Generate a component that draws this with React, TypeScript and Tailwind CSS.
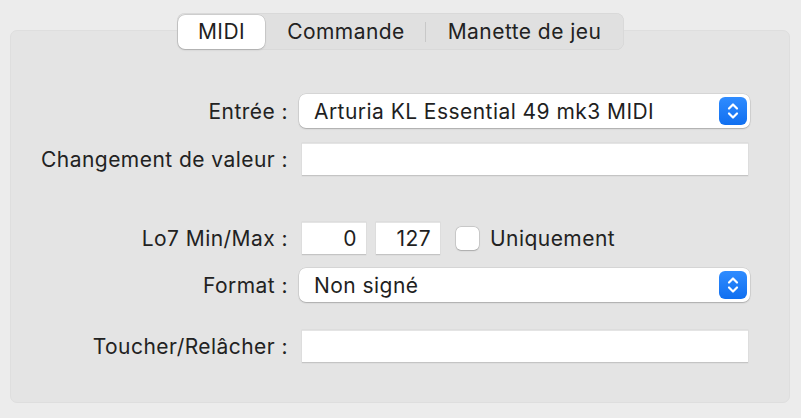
import React from 'react';

const font = { fontFamily: 'Inter, "Noto Sans", sans-serif' };

function Stepper() {
  return (
    <div className="w-[28px] h-[28px] rounded-[6px] bg-gradient-to-b from-[#2f8cff] to-[#0f6ff0] flex items-center justify-center">
      <svg width="14" height="20" viewBox="0 0 14 20" fill="none" stroke="white" strokeWidth="2.2" strokeLinecap="round" strokeLinejoin="round">
        <path d="M3 7.5 L7 3.5 L11 7.5" />
        <path d="M3 12.5 L7 16.5 L11 12.5" />
      </svg>
    </div>
  );
}

function Popup({ value }: { value: string }) {
  return (
    <div className="h-[34px] w-[451px] bg-white rounded-[7px] shadow-[0_0_0_0.5px_rgba(0,0,0,0.12),0_1px_1.5px_rgba(0,0,0,0.2)] flex items-center justify-between pl-[15px] pr-[3px]">
      <span className="text-[21px] tracking-[0.45px] text-[#1f1f1f] leading-none">{value}</span>
      <Stepper />
    </div>
  );
}

function Field({ className = '', children }: { className?: string; children?: React.ReactNode }) {
  return (
    <div className={`h-[33px] bg-white border-t border-t-[#e4e4e4] border-b border-b-[#c4c4c4] shadow-[0_0_0_0.5px_rgba(0,0,0,0.06)] flex items-center justify-end pr-[9px] text-[21px] tracking-[0.45px] text-[#1f1f1f] ${className}`}>
      {children}
    </div>
  );
}

function Label({ children }: { children: React.ReactNode }) {
  return <div className="w-[278px] text-right text-[21px] tracking-[0.45px] text-[#222] leading-none pr-[1px] whitespace-nowrap">{children}</div>;
}

export default function App() {
  return (
    <div className="w-[801px] h-[418px] bg-[#ececec] pt-[13px] overflow-hidden" style={font}>
      {/* Tabs */}
      <div className="relative z-10 flex justify-center -mb-[20px]">
        <div className="h-[37px] flex items-center bg-[#e0e0e0] rounded-[8px] shadow-[inset_0_0_0_0.5px_rgba(0,0,0,0.06)] px-[1px] text-[21px] tracking-[0.45px]">
          <div className="h-[34px] w-[87px] bg-white rounded-[7px] shadow-[0_0_0_0.5px_rgba(0,0,0,0.15),0_1px_2px_rgba(0,0,0,0.15)] flex items-center justify-center text-[#1f1f1f]">
            MIDI
          </div>
          <div className="w-[160px] flex items-center justify-center text-[#222] pl-[2px]">Commande</div>
          <div className="w-px h-[20px] bg-[#c8c8c8]" />
          <div className="w-[197px] flex items-center justify-center text-[#222]">Manette de jeu</div>
        </div>
      </div>

      {/* Panel */}
      <div className="mx-[10px] w-[780px] h-[373px] bg-[#e4e4e4] rounded-[7px] border border-[#dedede] pt-[63px]">
        <div className="flex items-center gap-[10px]">
          <Label>Entrée :</Label>
          <Popup value="Arturia KL Essential 49 mk3 MIDI" />
        </div>

        <div className="flex items-center gap-[13px] mt-[14px] h-[34px]">
          <Label>Changement de valeur :</Label>
          <Field className="w-[446px]" />
        </div>

        <div className="flex items-center gap-[13px] mt-[46px]">
          <Label>Lo7 Min/Max :</Label>
          <Field className="w-[64px]">0</Field>
          <Field className="w-[64px] -ml-[3px]">127</Field>
          <div className="flex items-center gap-[11px] ml-[3px]">
            <div className="w-[23px] h-[23px] bg-white rounded-[5px] shadow-[0_0_0_0.5px_rgba(0,0,0,0.18),0_0.5px_1.5px_rgba(0,0,0,0.18)]" />
            <span className="text-[21px] tracking-[0.45px] text-[#222]">Uniquement</span>
          </div>
        </div>

        <div className="flex items-center gap-[10px] mt-[13px]">
          <Label>Format :</Label>
          <Popup value="Non signé" />
        </div>

        <div className="flex items-center gap-[13px] mt-[28px]">
          <Label>Toucher/Relâcher :</Label>
          <Field className="w-[446px]" />
        </div>
      </div>
    </div>
  );
}
